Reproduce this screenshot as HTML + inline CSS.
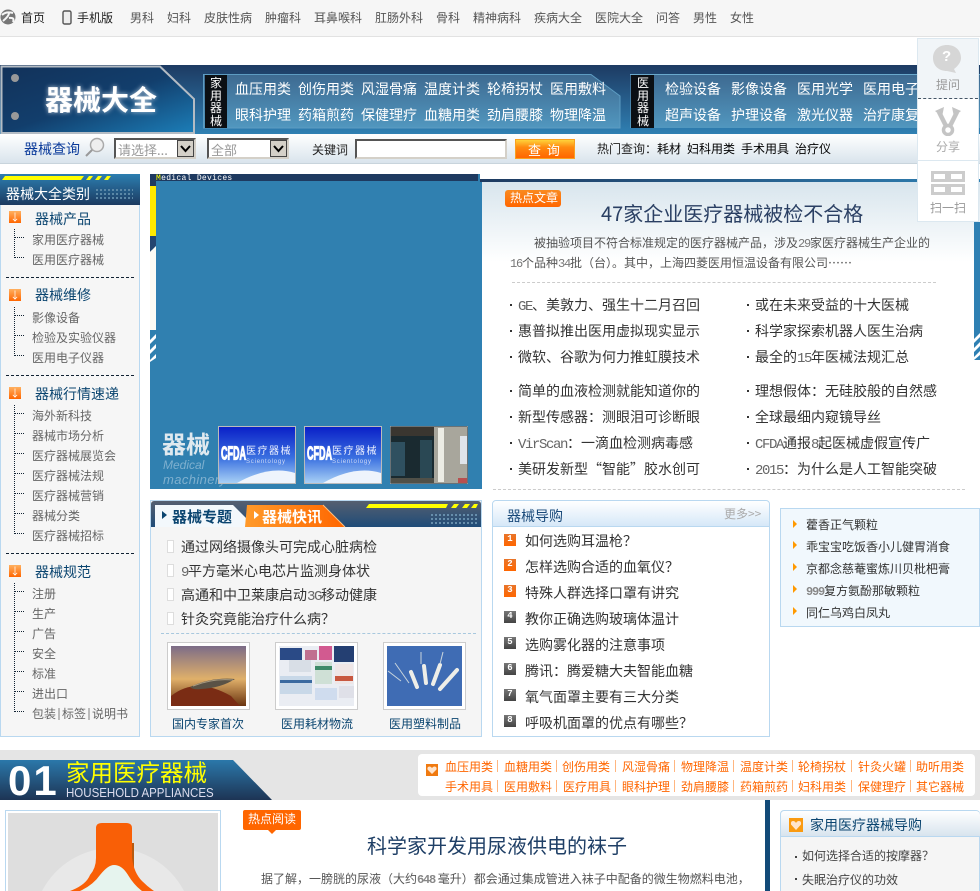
<!DOCTYPE html>
<html lang="zh-CN"><head><meta charset="utf-8"><title>器械大全</title>
<style>
html,body{margin:0;padding:0;width:980px;height:891px;overflow:hidden;background:#fff}
body{position:relative;font-family:"WenQuanYi Zen Hei","Noto Sans CJK SC",sans-serif;font-size:12px;color:#333}
div,span,svg,a{position:absolute}
a,.t{white-space:nowrap;line-height:1;text-decoration:none}
.u{position:static;font-family:"Liberation Mono",monospace;font-size:14px;letter-spacing:-1.400px;color:#666}
.u1{position:static;font-family:"Liberation Mono",monospace;font-size:12px;letter-spacing:-1.200px;color:#777}
.u2{position:static;font-family:"Liberation Mono",monospace;font-size:12px;letter-spacing:-1.200px;color:#888;font-weight:bold}
.n{color:#555;top:12px}.h{color:#fff;font-size:14px}
.s{color:#666;left:32px;margin-top:1px}.c{color:#0b4570;font-size:14px;left:35px}
.d{left:6px;width:128px;border-top:1px dashed #123}
.v{left:14px;width:0;border-left:1px dotted #123}
.e{left:15px;width:9px;border-top:1px dotted #123}
.i{left:9px;width:12px;height:12px;background:linear-gradient(#ffb060,#f60);color:#fff;font-size:10px;line-height:12px;text-align:center}
.a{font-size:14px;color:#333;margin-top:1px}
.dt{width:2px;height:2px;background:#333}
.g{font-size:14px;color:#333;left:525px;margin-top:1px}
.r{left:504px;width:12px;height:12px;color:#fff;font:bold 9px/11px "Liberation Mono",monospace;text-align:center}
.o{background:linear-gradient(#e8752a,#f60)}.k{background:linear-gradient(#777,#444)}
.m{left:806px;color:#333;margin-top:1px}
.ar{left:793px;width:0;height:0;border-left:4px solid #f90;border-top:4px solid transparent;border-bottom:4px solid transparent}
.l{color:#f60;top:761px}.x{top:760px;width:1px;height:12px;background:#ffb680}
.fr{top:642px;width:81px;height:66px;border:1px solid #ccc;background:#fff}
.cp{top:717px;color:#0b4570;margin-top:1px}
.li{left:167px;width:5px;height:11px;border:1px solid #ddd;background:#fff}
.th{top:426px;width:78px;height:58px;border:1px solid #bbb;box-sizing:border-box;background:linear-gradient(#0a20c8,#3a70e0 55%,#a8d0f5);overflow:hidden}
</style></head><body>
<div style="left:0;top:0;width:980px;height:891px;overflow:hidden">

<!-- top nav -->
<div style="left:0;top:0;width:980px;height:36px;background:#f6f6f6;border-bottom:1px solid #e2e2e2"></div>
<svg style="left:0;top:9px" width="17" height="17" viewBox="0 0 17 17"><circle cx="8" cy="8" r="7.500" fill="#777"/><path d="M2 6Q6 2 13 4M3 12Q9 7 9 4M9 9Q15 8 13 13" stroke="#f6f6f6" stroke-width="2" fill="none"/></svg>
<a style="left:21px;top:12px;color:#222">首页</a>
<svg style="left:62px;top:10px" width="10" height="15" viewBox="0 0 10 15"><rect x="1" y="1" width="8" height="13" rx="1.500" fill="#eee" stroke="#555" stroke-width="1.400"/></svg>
<a style="left:77px;top:12px;color:#222">手机版</a>
<a class="n" style="left:130px">男科</a><a class="n" style="left:167px">妇科</a><a class="n" style="left:204px">皮肤性病</a><a class="n" style="left:265px">肿瘤科</a><a class="n" style="left:314px">耳鼻喉科</a><a class="n" style="left:375px">肛肠外科</a><a class="n" style="left:436px">骨科</a><a class="n" style="left:473px">精神病科</a><a class="n" style="left:534px">疾病大全</a><a class="n" style="left:595px">医院大全</a><a class="n" style="left:656px">问答</a><a class="n" style="left:693px">男性</a><a class="n" style="left:730px">女性</a>

<!-- banner -->
<div style="left:0;top:65px;width:980px;height:69px;background:linear-gradient(#1d3a62,#2f80b3)"></div>
<svg style="left:0;top:65px" width="197" height="69" viewBox="0 0 197 69"><defs><linearGradient id="lg" x1="0" y1="0" x2="1" y2="1"><stop offset="0" stop-color="#12325a"/><stop offset=".5" stop-color="#123e6c"/><stop offset="1" stop-color="#1c7eb8"/></linearGradient></defs><path d="M1.500 1.500H160L194 34V68H1.500Z" fill="url(#lg)" stroke="#b4bcc4" stroke-width="2"/><circle cx="15" cy="13" r="4" fill="#999"/><circle cx="15" cy="51" r="4" fill="#999"/></svg>
<span class="t" style="left:45px;top:85px;font-size:28px;font-weight:bold;color:#fff;text-shadow:0 0 5px #bcd">器械大全</span>

<svg style="left:203px;top:74px" width="420" height="55" viewBox="0 0 420 55"><defs><linearGradient id="hg" x1="0" y1="0" x2="0" y2="1"><stop offset="0" stop-color="#3e6a91"/><stop offset="1" stop-color="#5197bf"/></linearGradient></defs><path d="M.5.5H388L417 22V54H.5Z" fill="url(#hg)" stroke="#5d9cc2"/></svg>
<div style="left:205px;top:75px;width:22px;height:53px;background:#0b0f14"></div>
<span class="t" style="left:210px;top:77px;width:12px;color:#fff;white-space:normal;line-height:12.500px">家用器械</span>
<a class="h" style="left:235px;top:82px">血压用类</a><a class="h" style="left:298px;top:82px">创伤用类</a><a class="h" style="left:361px;top:82px">风湿骨痛</a><a class="h" style="left:424px;top:82px">温度计类</a><a class="h" style="left:487px;top:82px">轮椅拐杖</a><a class="h" style="left:550px;top:82px">医用敷料</a>
<a class="h" style="left:235px;top:108px">眼科护理</a><a class="h" style="left:298px;top:108px">药箱煎药</a><a class="h" style="left:361px;top:108px">保健理疗</a><a class="h" style="left:424px;top:108px">血糖用类</a><a class="h" style="left:487px;top:108px">劲肩腰膝</a><a class="h" style="left:550px;top:108px">物理降温</a>

<div style="left:630px;top:74px;width:350px;height:54px;background:linear-gradient(#3e6a91,#5197bf);border-top:1px solid #6aa9cc;box-sizing:border-box"></div>
<div style="left:631px;top:75px;width:23px;height:53px;background:#0b0f14"></div>
<span class="t" style="left:637px;top:77px;width:12px;color:#fff;white-space:normal;line-height:12.500px">医用器械</span>
<a class="h" style="left:665px;top:82px">检验设备</a><a class="h" style="left:731px;top:82px">影像设备</a><a class="h" style="left:797px;top:82px">医用光学</a><a class="h" style="left:863px;top:82px">医用电子</a>
<a class="h" style="left:665px;top:108px">超声设备</a><a class="h" style="left:731px;top:108px">护理设备</a><a class="h" style="left:797px;top:108px">激光仪器</a><a class="h" style="left:863px;top:108px">治疗康复</a>

<!-- search -->
<div style="left:0;top:134px;width:980px;height:30px;background:linear-gradient(#fff,#d9e4ec);border-bottom:1px solid #c8d4dc;box-sizing:border-box"></div>
<span class="t" style="left:24px;top:142px;font-size:14px;color:#0a3a9a">器械查询</span>
<svg style="left:84px;top:137px" width="22" height="20" viewBox="0 0 22 20"><circle cx="13" cy="8" r="6.500" fill="#eee" stroke="#aaa" stroke-width="1.500"/><path d="M8 13L2 19" stroke="#999" stroke-width="2"/></svg>
<div style="left:114px;top:138px;width:82px;height:21px;background:#fff;border:2px solid;border-color:#555 #d4d0c8 #d4d0c8 #555;box-sizing:border-box"></div>
<span class="t" style="left:118px;top:143px;color:#999;font-size:13px">请选择...</span>
<div style="left:177px;top:140px;width:17px;height:17px;background:#d4d0c8;border:1px solid #444;box-sizing:border-box"></div>
<svg style="left:180px;top:145px" width="11" height="8" viewBox="0 0 11 8"><path d="M1 1L5.500 6 10 1" stroke="#000" stroke-width="2" fill="none"/></svg>
<div style="left:207px;top:138px;width:82px;height:21px;background:#fff;border:2px solid;border-color:#555 #d4d0c8 #d4d0c8 #555;box-sizing:border-box"></div>
<span class="t" style="left:211px;top:143px;color:#999;font-size:13px">全部</span>
<div style="left:270px;top:140px;width:17px;height:17px;background:#d4d0c8;border:1px solid #444;box-sizing:border-box"></div>
<svg style="left:273px;top:145px" width="11" height="8" viewBox="0 0 11 8"><path d="M1 1L5.500 6 10 1" stroke="#000" stroke-width="2" fill="none"/></svg>
<span class="t" style="left:312px;top:144px;color:#222">关键词</span>
<div style="left:355px;top:139px;width:152px;height:20px;background:#fff;border:2px solid;border-color:#555 #d4d0c8 #d4d0c8 #555;box-sizing:border-box"></div>
<div style="left:515px;top:139px;width:60px;height:20px;background:linear-gradient(#ffd23a,#ff8a10 40%,#f60);border:1px solid #f9a020;box-sizing:border-box"></div>
<span class="t" style="left:528px;top:143px;color:#fff;font-size:13px">查 &nbsp;询</span>
<span class="t" style="left:597px;top:143px;color:#222">热门查询：</span><a style="left:657px;top:143px;color:#000">耗材</a><a style="left:687px;top:143px;color:#000">妇科用类</a><a style="left:741px;top:143px;color:#000">手术用具</a><a style="left:795px;top:143px;color:#000">治疗仪</a>

<!-- sidebar -->
<div style="left:0;top:174px;width:140px;height:31px;background:linear-gradient(#2c7eb0,#1c3a60)"></div>
<svg style="left:0;top:175px" width="112" height="5" viewBox="0 0 112 5"><path d="M2 5L5 1H84L81 5ZM86 5L89 1H93L90 5ZM95 5L98 1H102L99 5ZM104 5L107 1H111L108 5Z" fill="#ff0"/></svg>
<span class="t" style="left:6px;top:187px;font-size:14px;color:#fff">器械大全类别</span>
<div style="left:0;top:205px;width:140px;height:532px;background:#f6f6f6;border:1px solid #b9d8f0;border-top:0;box-sizing:border-box"></div>
<div style="left:95px;top:188px;width:38px;height:13px;background:radial-gradient(#5f8caa 1px,transparent 1.200px) 0 0/4px 4px"></div>

<div class="i" style="top:211px">↓</div><a class="c" style="top:212px">器械产品</a>
<div class="v" style="top:229px;height:29px"></div><div class="e" style="top:237px"></div><div class="e" style="top:257px"></div>
<a class="s" style="top:233px">家用医疗器械</a><a class="s" style="top:253px">医用医疗器械</a>
<div class="d" style="top:277px"></div>

<div class="i" style="top:289px">↓</div><a class="c" style="top:288px">器械维修</a>
<div class="v" style="top:307px;height:49px"></div><div class="e" style="top:315px"></div><div class="e" style="top:335px"></div><div class="e" style="top:355px"></div>
<a class="s" style="top:311px">影像设备</a><a class="s" style="top:331px">检验及实验仪器</a><a class="s" style="top:351px">医用电子仪器</a>
<div class="d" style="top:375px"></div>

<div class="i" style="top:387px">↓</div><a class="c" style="top:387px">器械行情速递</a>
<div class="v" style="top:405px;height:129px"></div><div class="e" style="top:413px"></div><div class="e" style="top:433px"></div><div class="e" style="top:453px"></div><div class="e" style="top:473px"></div><div class="e" style="top:493px"></div><div class="e" style="top:513px"></div><div class="e" style="top:533px"></div>
<a class="s" style="top:409px">海外新科技</a><a class="s" style="top:429px">器械市场分析</a><a class="s" style="top:449px">医疗器械展览会</a><a class="s" style="top:469px">医疗器械法规</a><a class="s" style="top:489px">医疗器械营销</a><a class="s" style="top:509px">器械分类</a><a class="s" style="top:529px">医疗器械招标</a>
<div class="d" style="top:553px"></div>

<div class="i" style="top:565px">↓</div><a class="c" style="top:565px">器械规范</a>
<div class="v" style="top:583px;height:129px"></div><div class="e" style="top:591px"></div><div class="e" style="top:611px"></div><div class="e" style="top:631px"></div><div class="e" style="top:651px"></div><div class="e" style="top:671px"></div><div class="e" style="top:691px"></div><div class="e" style="top:711px"></div>
<a class="s" style="top:587px">注册</a><a class="s" style="top:607px">生产</a><a class="s" style="top:627px">广告</a><a class="s" style="top:647px">安全</a><a class="s" style="top:667px">标准</a><a class="s" style="top:687px">进出口</a>
<a class="s" style="top:707px">包装</a><div style="left:58px;top:708px;width:2px;height:12px;background:#bbb"></div><a class="s" style="left:62px;top:707px">标签</a><div style="left:88px;top:708px;width:2px;height:12px;background:#bbb"></div><a class="s" style="left:92px;top:707px">说明书</a>

<!-- article backdrop -->
<div style="left:482px;top:182px;width:498px;height:80px;background:linear-gradient(#d8e5ed,#fff)"></div>

<!-- centre feature -->
<div style="left:150px;top:174px;width:330px;height:315px;background:#3080b0"></div>
<div style="left:150px;top:174px;width:328px;height:7px;background:#1e3a60"></div>
<div style="left:150px;top:181px;width:6px;height:5px;background:#1e3a60"></div>
<div style="left:150px;top:250px;width:6px;height:80px;background:#fbfbf4"></div>
<div style="left:150px;top:186px;width:6px;height:50px;background:#ffe900"></div>
<svg style="left:150px;top:236px" width="6" height="16" viewBox="0 0 6 16"><path d="M0 0H6V10L0 16Z" fill="#24456f"/><path d="M0 16L6 10V16Z" fill="#fbfbf4"/></svg>
<svg style="left:150px;top:330px" width="6" height="32" viewBox="0 0 6 32"><path d="M0 10L6 4V8L0 14ZM0 20L6 14V18L0 24ZM0 30L6 24V28L0 32Z" fill="#fff"/></svg>
<span class="t" style="left:156px;top:175px;color:#fff;font:8px/8px 'Liberation Mono',monospace;letter-spacing:.3px"><span style="position:static;color:#ff0">M</span>edical Devices</span>
<span class="t" style="left:162px;top:431px;font-size:24px;font-weight:bold;color:#dfe9ef">器械</span>
<span class="t" style="left:163px;top:459px;font:italic 12px/12px 'Liberation Sans',sans-serif;color:#7fb0cf">Medical</span>
<span class="t" style="left:163px;top:473px;font:italic 13px/13px 'Liberation Sans',sans-serif;color:#7fb0cf;letter-spacing:.4px">machinery</span>

<div class="th" style="left:218px"><svg style="left:0;top:0" width="76" height="56" viewBox="0 0 76 56"><path d="M18 56Q50 38 76 46V56Z" fill="#eef4fc"/></svg><span class="t" style="left:2px;top:19px;color:#fff;font:bold 9.500px/9.500px 'Liberation Sans',sans-serif;-webkit-text-stroke:.6px #fff;transform:scale(.95,1.900);transform-origin:0 0">CFDA</span><span class="t" style="left:27px;top:18px;color:#eef2ff;font-size:10px;letter-spacing:1.500px">医疗器械</span><span class="t" style="left:27px;top:32px;color:#cdd9f5;font:6px/6px 'Liberation Sans',sans-serif;letter-spacing:.8px">Scientology</span></div>
<div class="th" style="left:304px"><svg style="left:0;top:0" width="76" height="56" viewBox="0 0 76 56"><path d="M18 56Q50 38 76 46V56Z" fill="#eef4fc"/></svg><span class="t" style="left:2px;top:19px;color:#fff;font:bold 9.500px/9.500px 'Liberation Sans',sans-serif;-webkit-text-stroke:.6px #fff;transform:scale(.95,1.900);transform-origin:0 0">CFDA</span><span class="t" style="left:27px;top:18px;color:#eef2ff;font-size:10px;letter-spacing:1.500px">医疗器械</span><span class="t" style="left:27px;top:32px;color:#cdd9f5;font:6px/6px 'Liberation Sans',sans-serif;letter-spacing:.8px">Scientology</span></div>
<svg style="left:390px;top:426px" width="78" height="58" viewBox="0 0 78 58"><rect width="78" height="58" fill="#1a2a30" stroke="#bbb"/><rect x="1" y="1" width="46" height="9" fill="#3a3630"/><rect x="1" y="16" width="14" height="34" fill="#2f5060"/><rect x="30" y="14" width="12" height="38" fill="#2a4854"/><rect x="44" y="1" width="33" height="56" fill="#a8a69c"/><rect x="48" y="2" width="6" height="54" fill="#ecece4"/><rect x="70" y="10" width="7" height="28" fill="#dfe4ea"/><rect x="1" y="52" width="43" height="5" fill="#505048"/><rect x="68" y="52" width="9" height="5" fill="#b85050"/></svg>

<!-- article -->
<div style="left:480px;top:179px;width:500px;height:3px;background:linear-gradient(90deg,#1e3a60,#2f80b3)"></div>
<div style="left:480px;top:182px;width:2px;height:307px;background:#2f80b3"></div>
<div style="left:974px;top:222px;width:6px;height:138px;background:#2f80b3"></div>
<svg style="left:974px;top:333px" width="6" height="27" viewBox="0 0 6 27"><path d="M0 6L6 0V4L0 10ZM0 15L6 9V13L0 19ZM0 24L6 18V22L0 27Z" fill="#fff"/></svg>
<div style="left:505px;top:190px;width:56px;height:17px;background:linear-gradient(#f98a20,#f60);border-radius:3px"></div>
<span class="t" style="left:510px;top:192px;color:#fff">热点文章</span>
<span class="t" style="left:601px;top:203px;font-size:20px;color:#2a3f63">47家企业医疗器械被检不合格</span>
<span class="t" style="left:534px;top:237px;color:#555">被抽验项目不符合标准规定的医疗器械产品，涉及<span class="u1">29</span>家医疗器械生产企业的</span>
<span class="t" style="left:510px;top:257px;color:#555"><span class="u1">16</span>个品种<span class="u1">34</span>批（台）。其中，上海四菱医用恒温设备有限公司……</span>
<div style="left:512px;top:282px;width:424px;border-top:1px dashed #ccc"></div>

<div class="dt" style="left:510px;top:304px"></div><a class="a" style="left:518px;top:297px"><span class="u">GE</span>、美敦力、强生十二月召回</a>
<div class="dt" style="left:747px;top:304px"></div><a class="a" style="left:755px;top:297px">或在未来受益的十大医械</a>
<div class="dt" style="left:510px;top:330px"></div><a class="a" style="left:518px;top:323px">惠普拟推出医用虚拟现实显示</a>
<div class="dt" style="left:747px;top:330px"></div><a class="a" style="left:755px;top:323px">科学家探索机器人医生治病</a>
<div class="dt" style="left:510px;top:356px"></div><a class="a" style="left:518px;top:349px">微软、谷歌为何力推虹膜技术</a>
<div class="dt" style="left:747px;top:356px"></div><a class="a" style="left:755px;top:349px">最全的<span class="u">15</span>年医械法规汇总</a>
<div class="dt" style="left:510px;top:390px"></div><a class="a" style="left:518px;top:383px">简单的血液检测就能知道你的</a>
<div class="dt" style="left:747px;top:390px"></div><a class="a" style="left:755px;top:383px">理想假体：无硅胶般的自然感</a>
<div class="dt" style="left:510px;top:416px"></div><a class="a" style="left:518px;top:409px">新型传感器：测眼泪可诊断眼</a>
<div class="dt" style="left:747px;top:416px"></div><a class="a" style="left:755px;top:409px">全球最细内窥镜导丝</a>
<div class="dt" style="left:510px;top:442px"></div><a class="a" style="left:518px;top:435px"><span class="u">VirScan</span>：一滴血检测病毒感</a>
<div class="dt" style="left:747px;top:442px"></div><a class="a" style="left:755px;top:435px"><span class="u">CFDA</span>通报<span class="u">8</span>起医械虚假宣传广</a>
<div class="dt" style="left:510px;top:468px"></div><a class="a" style="left:518px;top:461px">美研发新型“智能”胶水创可</a>
<div class="dt" style="left:747px;top:468px"></div><a class="a" style="left:755px;top:461px"><span class="u">2015</span>：为什么是人工智能突破</a>
<div style="left:493px;top:489px;width:472px;border-top:1px dashed #ccc"></div>

<!-- panel topics -->
<div style="left:150px;top:500px;width:332px;height:237px;background:#f5f5f5;border:1px solid #b9d8f0;box-sizing:border-box"></div>
<div style="left:151px;top:501px;width:330px;height:26px;background:linear-gradient(#555f70,#1f4c78);border-radius:3px 3px 0 0"></div>
<svg style="left:155px;top:503px" width="192" height="25" viewBox="0 0 192 25"><defs><linearGradient id="og" x1="0" y1="0" x2="1" y2="0"><stop offset="0" stop-color="#ff9a2a"/><stop offset="1" stop-color="#f60"/></linearGradient></defs><path d="M0 24V2H78L100 24Z" fill="#f3f8fc"/><path d="M90 24L92 2H168L190 24Z" fill="url(#og)"/><path d="M168 2L190 24" stroke="#ffc080"/><path d="M7 8V16L12 12Z" fill="#0b4570"/><path d="M99 8V16L104 12Z" fill="#fff"/></svg>
<svg style="left:366px;top:504px" width="112" height="4" viewBox="0 0 112 4"><path d="M0 4L3 0H82L80 4ZM85 4L88 0H93L90 4ZM96 4L99 0H104L101 4ZM105 4L108 0H112L110 4Z" fill="#ff0"/></svg>
<div style="left:430px;top:513px;width:48px;height:12px;background:radial-gradient(#6b93b0 1px,transparent 1.200px) 0 0/4px 4px"></div>
<span class="t" style="left:172px;top:509px;font-size:15px;font-weight:bold;color:#0b4570">器械专题</span>
<span class="t" style="left:262px;top:509px;font-size:15px;font-weight:bold;color:#fff">器械快讯</span>
<div class="li" style="top:540px"></div><a class="a" style="left:181px;top:539px">通过网络摄像头可完成心脏病检</a>
<div class="li" style="top:564px"></div><a class="a" style="left:181px;top:563px"><span class="u">9</span>平方毫米心电芯片监测身体状</a>
<div class="li" style="top:588px"></div><a class="a" style="left:181px;top:587px">高通和中卫莱康启动<span class="u">3G</span>移动健康</a>
<div class="li" style="top:612px"></div><a class="a" style="left:181px;top:611px">针灸究竟能治疗什么病？</a>
<div style="left:161px;top:633px;width:315px;border-top:1px dashed #a8c8de"></div>

<div class="fr" style="left:167px"></div>
<svg style="left:171px;top:646px" width="75" height="60" viewBox="0 0 75 60"><defs><linearGradient id="p1" x1="0" y1="0" x2="0" y2="1"><stop offset="0" stop-color="#7c6c88"/><stop offset=".55" stop-color="#e0b06a"/><stop offset="1" stop-color="#6a3410"/></linearGradient></defs><rect width="75" height="60" fill="url(#p1)"/><path d="M0 60V50Q25 30 60 50L69 60Z" fill="#7a2c14"/><path d="M19 41Q40 31 64 33Q50 42 30 43Q22 44 19 41Z" fill="#5a5246"/><path d="M22 40Q42 32 62 34" stroke="#a89a80" fill="none"/></svg>
<div class="fr" style="left:275px"></div>
<svg style="left:279px;top:646px" width="75" height="60" viewBox="0 0 75 60"><rect width="75" height="60" fill="#eaedf3"/><rect x="1" y="2" width="22" height="12" fill="#2a4a86"/><rect x="40" y="0" width="13" height="14" fill="#d25a90"/><rect x="26" y="4" width="12" height="10" fill="#c07090"/><rect x="55" y="0" width="20" height="16" fill="#243f72"/><rect x="10" y="14" width="22" height="12" fill="#d8dee6"/><rect x="36" y="16" width="17" height="22" fill="#cfe0d6"/><rect x="36" y="20" width="17" height="4" fill="#3e8a68"/><rect x="56" y="18" width="18" height="20" fill="#efe6e6"/><rect x="56" y="30" width="18" height="5" fill="#c85840"/><rect x="1" y="30" width="32" height="18" fill="#c8d8e8"/><rect x="1" y="34" width="32" height="3" fill="#3a6aa0"/><rect x="36" y="42" width="22" height="12" fill="#cfdcee"/><rect x="60" y="40" width="15" height="12" fill="#dfe0e8"/></svg>
<div class="fr" style="left:383px"></div>
<svg style="left:387px;top:646px" width="75" height="60" viewBox="0 0 75 60"><rect width="75" height="60" fill="#3f6cb4"/><g stroke="#eeeee8" stroke-width="4" stroke-linecap="round"><path d="M24 26L30 41"/><path d="M37 20L39 37"/><path d="M53 19L46 38"/><path d="M70 24L53 43"/></g><g stroke="#c8d4dc" stroke-width="1"><path d="M1 25L14 35"/><path d="M8 17L22 37"/><path d="M34 6V18"/><path d="M56 6L53 18"/></g></svg>
<a class="cp" style="left:172px">国内专家首次</a><a class="cp" style="left:281px">医用耗材物流</a><a class="cp" style="left:389px">医用塑料制品</a>

<!-- panel guide -->
<div style="left:492px;top:500px;width:278px;height:237px;background:#fff;border:1px solid #b9d8f0;border-radius:4px 4px 0 0;box-sizing:border-box"></div>
<div style="left:493px;top:501px;width:276px;height:26px;background:linear-gradient(#fff,#d6e8f8);border-bottom:1px solid #b9d8f0;box-sizing:border-box;border-radius:4px 4px 0 0"></div>
<span class="t" style="left:507px;top:509px;font-size:14px;color:#1a4a7a">器械导购</span>
<span class="t" style="left:724px;top:508px;color:#aaa">更多&gt;&gt;</span>
<div class="r o" style="top:534px">1</div><a class="g" style="top:533px">如何选购耳温枪？</a>
<div class="r o" style="top:559px">2</div><a class="g" style="top:559px">怎样选购合适的血氧仪？</a>
<div class="r o" style="top:585px">3</div><a class="g" style="top:585px">特殊人群选择口罩有讲究</a>
<div class="r k" style="top:611px">4</div><a class="g" style="top:611px">教你正确选购玻璃体温计</a>
<div class="r k" style="top:637px">5</div><a class="g" style="top:637px">选购雾化器的注意事项</a>
<div class="r k" style="top:663px">6</div><a class="g" style="top:663px">腾讯：腾爱糖大夫智能血糖</a>
<div class="r k" style="top:689px">7</div><a class="g" style="top:689px">氧气面罩主要有三大分类</a>
<div class="r k" style="top:715px">8</div><a class="g" style="top:715px">呼吸机面罩的优点有哪些？</a>

<!-- small list -->
<div style="left:780px;top:508px;width:200px;height:119px;background:#f1f8fd;border:1px solid #b9d8f0;box-sizing:border-box"></div>
<div class="ar" style="top:520px"></div><a class="m" style="top:518px">藿香正气颗粒</a>
<div class="ar" style="top:541px"></div><a class="m" style="top:540px">乖宝宝吃饭香小儿健胃消食</a>
<div class="ar" style="top:563px"></div><a class="m" style="top:562px">京都念慈菴蜜炼川贝枇杷膏</a>
<div class="ar" style="top:585px"></div><a class="m" style="top:584px"><span class="u2">999</span>复方氨酚那敏颗粒</a>
<div class="ar" style="top:607px"></div><a class="m" style="top:606px">同仁乌鸡白凤丸</a>

<!-- section 01 -->
<div style="left:0;top:750px;width:980px;height:50px;background:#e5e5e5"></div>
<svg style="left:0;top:760px" width="273" height="40" viewBox="0 0 273 40"><defs><linearGradient id="sb" x1="0" y1="0" x2="0" y2="1"><stop offset="0" stop-color="#2b78aa"/><stop offset="1" stop-color="#1d3454"/></linearGradient></defs><path d="M0 0H233L272 40H0Z" fill="url(#sb)"/></svg>
<span class="t" style="left:8px;top:760px;font:bold 42px/42px 'Liberation Sans',sans-serif;color:#fff;letter-spacing:2px">01</span>
<span class="t" style="left:66px;top:760px;font-size:23.500px;color:#ff0">家用医疗器械</span>
<span class="t" style="left:66px;top:786px;font:13px/13px 'Liberation Sans',sans-serif;color:#dde;transform:scaleX(.885);transform-origin:0 0">HOUSEHOLD APPLIANCES</span>
<div style="left:418px;top:754px;width:557px;height:42px;background:#fff;border-radius:4px"></div>
<svg style="left:426px;top:764px" width="12" height="12" viewBox="0 0 12 12"><rect width="12" height="12" fill="#f07a10"/><path d="M6 10L1.500 5.500Q1 2.500 3.500 2.500 5 2.500 6 4 7 2.500 8.500 2.500 11 2.500 10.500 5.500Z" fill="#ffe4cc"/></svg>
<a class="l" style="left:445px">血压用类</a><a class="l" style="left:504px">血糖用类</a><a class="l" style="left:562px">创伤用类</a><a class="l" style="left:622px">风湿骨痛</a><a class="l" style="left:681px">物理降温</a><a class="l" style="left:740px">温度计类</a><a class="l" style="left:798px">轮椅拐杖</a><a class="l" style="left:858px">针灸火罐</a><a class="l" style="left:916px">助听用类</a>
<a class="l" style="left:445px;top:781px">手术用具</a><a class="l" style="left:504px;top:781px">医用敷料</a><a class="l" style="left:563px;top:781px">医疗用具</a><a class="l" style="left:622px;top:781px">眼科护理</a><a class="l" style="left:681px;top:781px">劲肩腰膝</a><a class="l" style="left:740px;top:781px">药箱煎药</a><a class="l" style="left:798px;top:781px">妇科用类</a><a class="l" style="left:858px;top:781px">保健理疗</a><a class="l" style="left:916px;top:781px">其它器械</a>
<div class="x" style="left:497px"></div><div class="x" style="left:556px"></div><div class="x" style="left:615px"></div><div class="x" style="left:674px"></div><div class="x" style="left:733px"></div><div class="x" style="left:792px"></div><div class="x" style="left:851px"></div><div class="x" style="left:910px"></div>
<div class="x" style="left:497px;top:780px"></div><div class="x" style="left:556px;top:780px"></div><div class="x" style="left:615px;top:780px"></div><div class="x" style="left:674px;top:780px"></div><div class="x" style="left:733px;top:780px"></div><div class="x" style="left:792px;top:780px"></div><div class="x" style="left:851px;top:780px"></div><div class="x" style="left:910px;top:780px"></div>

<!-- bottom -->
<div style="left:5px;top:810px;width:216px;height:81px;border:1px solid #b9d8f0;border-bottom:0;box-sizing:border-box"></div>
<div style="left:8px;top:813px;width:210px;height:78px;background:#dedede"></div>
<svg style="left:8px;top:813px" width="210" height="78" viewBox="0 0 210 78"><path d="M34 78A80 80 0 0 1 176 78Z" fill="#e8e8e8"/><path d="M124 30L126 30V58L124 58Z" fill="#b85a10"/><path d="M62 78Q78 72 82 62Q88 55 88 45V15Q88 10 94 10H118Q124 10 124 15V45Q126 60 134 68Q140 74 146 78Z" fill="#f95f06"/><path d="M72 78Q85 72 92 62Q100 52 106 52Q114 52 120 62Q126 72 134 78Z" fill="#e6f4ee"/></svg>
<svg style="left:243px;top:810px" width="58" height="24" viewBox="0 0 58 24"><path d="M2 0H56Q58 0 58 2V18Q58 20 56 20H33L29 24 25 20H2Q0 20 0 18V2Q0 0 2 0Z" fill="#f60"/></svg>
<span class="t" style="left:248px;top:813px;color:#fff">热点阅读</span>
<span class="t" style="left:367px;top:835px;font-size:20px;color:#1f3f66">科学家开发用尿液供电的袜子</span>
<span class="t" style="left:261px;top:873px;color:#555">据了解，一膀胱的尿液（大约<span class="u2">648</span> 毫升）都会通过集成管进入袜子中配备的微生物燃料电池，</span>
<div style="left:765px;top:800px;width:5px;height:91px;background:#124a78"></div>
<div style="left:780px;top:810px;width:200px;height:81px;background:#f5f5f5;border:1px solid #b9d8f0;border-bottom:0;box-sizing:border-box;border-radius:4px 4px 0 0"></div>
<div style="left:781px;top:811px;width:199px;height:26px;background:linear-gradient(#fff,#d8e4ee);border-bottom:1px solid #b9d8f0;box-sizing:border-box;border-radius:4px 4px 0 0"></div>
<svg style="left:789px;top:818px" width="14" height="14" viewBox="0 0 14 14"><rect width="14" height="14" fill="#fa9a10"/><path d="M7 12L2 6.500Q1.500 3 4 3 6 3 7 5 8 3 10 3 12.500 3 12 6.500Z" fill="#ffe4cc"/></svg>
<span class="t" style="left:810px;top:818px;font-size:14px;color:#0b4570">家用医疗器械导购</span>
<div class="dt" style="left:795px;top:856px;background:#444"></div><a style="left:802px;top:850px;color:#444">如何选择合适的按摩器？</a>
<div class="dt" style="left:795px;top:878px;background:#444"></div><a style="left:802px;top:874px;color:#444">失眠治疗仪的功效</a>

<!-- float -->
<div style="left:917px;top:38px;width:62px;height:184px;background:#fff;border:1px solid #dce8f0;box-sizing:border-box"></div>
<div style="left:918px;top:39px;width:60px;height:60px;background:#f1f5f8;border-bottom:1px dashed #456;box-sizing:border-box"></div>
<div style="left:918px;top:160px;width:60px;border-top:1px solid #dce8f0"></div>
<svg style="left:932px;top:44px" width="30" height="30" viewBox="0 0 30 30"><path d="M15 1C7 1 1 6 1 14S7 27 15 27L24 29 22 25C26 22 29 18 29 14 29 6 23 1 15 1Z" fill="#d6d6d6"/></svg>
<span class="t" style="left:942px;top:49px;font:bold 15px/15px 'Liberation Sans',sans-serif;color:#fff">?</span>
<span class="t" style="left:936px;top:79px;color:#999">提问</span>
<svg style="left:934px;top:106px" width="28" height="30" viewBox="0 0 28 30"><path d="M1 5L10 1 8 11ZM27 5L18 1 20 11Z" fill="#c4c4c4"/><path d="M5 6L12 20M23 6L16 20" stroke="#c4c4c4" stroke-width="4.500" fill="none"/><circle cx="14" cy="24" r="4.500" fill="none" stroke="#c4c4c4" stroke-width="3.500"/></svg>
<span class="t" style="left:936px;top:141px;color:#aaa">分享</span>
<svg style="left:931px;top:171px" width="34" height="24" viewBox="0 0 34 24"><g fill="none" stroke="#ccc" stroke-width="3"><rect x="1.500" y="1.500" width="14" height="8"/><rect x="18.500" y="1.500" width="14" height="8"/><rect x="1.500" y="14.500" width="14" height="8"/><rect x="18.500" y="14.500" width="14" height="8"/></g></svg>
<span class="t" style="left:930px;top:202px;color:#999">扫一扫</span>
</div>
</body></html>
